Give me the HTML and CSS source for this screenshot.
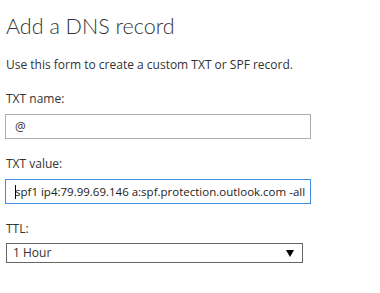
FILE: index.html
```html
<!DOCTYPE html>
<html>
<head>
<meta charset="utf-8">
<link rel="stylesheet" href="styles.css">
</head>
<body>
<div class="panel">
  <h1 class="title">Add a DNS record</h1>
  <p class="intro">Use this form to create a custom TXT or SPF record.</p>
  <div class="field field-name">
    <label class="label">TXT name:</label>
    <div class="input input-name">@</div>
  </div>
  <div class="field">
    <label class="label">TXT value:</label>
    <div class="input input-value"><span class="caret"></span>spf1 ip4:79.99.69.146 a:spf.protection.outlook.com -all</div>
  </div>
  <div class="field">
    <label class="label">TTL:</label>
    <div class="select">1 Hour<svg class="arrow" width="8" height="7" viewBox="0 0 8 7"><path d="M0 0H8L4 7Z" fill="#000"/></svg></div>
  </div>
</div>
</body>
</html>
```
FILE: styles.css
```css
html, body { margin: 0; padding: 0; background: #fff; }
body { font-family: "Open Sans", "Noto Sans", sans-serif; color: #333; }
.panel { padding: 11px 0 0 6px; width: 306px; }
.title { margin: 0; font-family: Lato, Roboto, sans-serif; font-weight: 300; font-size: 21.5px; line-height: 30px; color: #333; }
.intro { margin: 15px 0 0 0; font-size: 12px; line-height: 17px; color: #333; }
.field { margin-top: 16px; }
.field-name { margin-top: 17px; }
.label { display: block; font-size: 12px; line-height: 17px; color: #333; }
.input { position: relative; box-sizing: border-box; height: 25px; margin-top: 7px; margin-left: -1px; width: 306px; border: 1px solid #a6b0ae; padding: 0 9px; font-size: 12px; line-height: 23px; color: #333; white-space: nowrap; overflow: hidden; }
.input-value { border-color: #3b8ee4; color: #222; font-size: 11.5px; }
.caret { position: absolute; left: 9px; top: 5px; width: 1px; height: 14px; background: #000; }
.select { position: relative; box-sizing: border-box; height: 20px; margin-top: 6px; width: 297px; border: 1px solid #666; padding: 0 6px; font-size: 12px; line-height: 18px; color: #333; }
.arrow { position: absolute; right: 8px; top: 6px; }
```
